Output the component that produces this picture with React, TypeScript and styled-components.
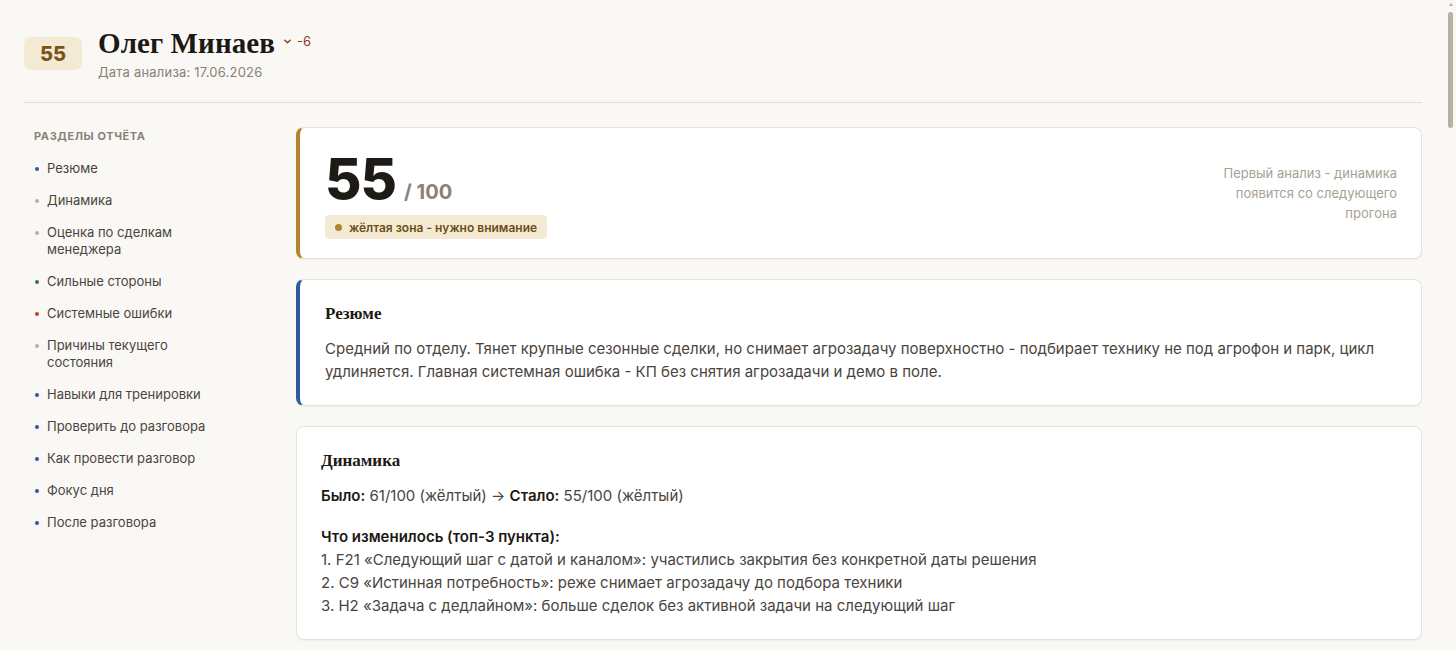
import React from 'react'
import styled, { createGlobalStyle } from 'styled-components'

const GlobalStyle = createGlobalStyle`
  html, body {
    margin: 0;
    padding: 0;
    background: #faf8f5;
  }
  body {
    font-family: Inter, 'Noto Sans', sans-serif;
    color: #3f3a35;
  }
  ::-webkit-scrollbar {
    width: 0;
  }
`

const Page = styled.div`
  padding: 28px 34px 40px 24px;
`

// the window scrollbar, drawn over the right edge of the page
const ScrollRail = styled.div`
  position: fixed;
  top: 0;
  right: 0;
  width: 10px;
  height: 100vh;
  background: #faf8f5;

  &::before {
    content: '';
    position: absolute;
    top: 3px;
    left: 3px;
    border-left: 2px solid transparent;
    border-right: 2px solid transparent;
    border-bottom: 3px solid #b9b0a4;
  }

  &::after {
    content: '';
    position: absolute;
    top: 12px;
    left: 2px;
    width: 5px;
    height: 116px;
    border-radius: 3px;
    background: #b9b0a4;
  }
`

const Header = styled.header`
  display: flex;
  align-items: flex-start;
  gap: 16px;
  padding-bottom: 22px;
  border-bottom: 1px solid #e4dfd7;
`

const ScoreBadge = styled.div`
  margin-top: 9px;
  width: 58px;
  height: 33px;
  border-radius: 7px;
  background: #f4ead4;
  color: #7a5518;
  font-size: 20px;
  font-weight: 800;
  display: flex;
  align-items: center;
  justify-content: center;
`

const NameBlock = styled.div`
  display: flex;
  flex-direction: column;
  gap: 6px;
`

const NameRow = styled.div`
  display: flex;
  align-items: center;
  gap: 8px;
`

const Name = styled.h1`
  margin: 0;
  font-family: 'Liberation Serif', serif;
  font-size: 29px;
  font-weight: 700;
  color: #1c1814;
  letter-spacing: 0.1px;
  line-height: 30px;
`

const Delta = styled.span`
  display: flex;
  align-items: center;
  gap: 5px;
  color: #8c3a2c;
  font-size: 13px;
  margin-top: -4px;
`

const DateText = styled.div`
  font-size: 13px;
  letter-spacing: 0.2px;
  color: #8a8077;
`

const Body = styled.div`
  display: grid;
  grid-template-columns: 248px 1fr;
  column-gap: 24px;
  padding-top: 24px;
`

const Sidebar = styled.nav`
  padding: 2px 50px 0 10px;
`

const SidebarTitle = styled.div`
  font-size: 11px;
  font-weight: 700;
  letter-spacing: 0.6px;
  color: #8a8077;
  text-transform: uppercase;
  margin-bottom: 17px;
`

const NavList = styled.ul`
  list-style: none;
  margin: 0;
  padding: 0;
  display: flex;
  flex-direction: column;
  gap: 15px;
`

const NavItem = styled.li<{ $dot: string }>`
  position: relative;
  padding-left: 13px;
  font-size: 13px;
  line-height: 17px;
  color: #4a443e;

  &::before {
    content: '';
    position: absolute;
    left: 1px;
    top: 7px;
    width: 4px;
    height: 4px;
    border-radius: 50%;
    background: ${(p) => p.$dot};
  }
`

const Main = styled.main`
  display: flex;
  flex-direction: column;
  gap: 20px;
  min-width: 0;
`

const Card = styled.section<{ $accent?: string }>`
  background: #fff;
  border: 1px solid #e7e1d8;
  border-left: ${(p) => (p.$accent ? `4px solid ${p.$accent}` : '1px solid #e7e1d8')};
  border-radius: 8px;
  box-shadow: 0 1px 2px rgba(60, 45, 30, 0.06);
  padding: ${(p) => (p.$accent ? '22px 24px 22px 25px' : '22px 24px')};
`

const ScoreCard = styled(Card)`
  display: flex;
  justify-content: space-between;
  align-items: center;
  padding-top: 21px;
  padding-bottom: 19px;
`

const ScoreLeft = styled.div`
  display: flex;
  flex-direction: column;
  gap: 6px;
`

const ScoreLine = styled.div`
  display: flex;
  align-items: baseline;
  gap: 8px;
`

const BigScore = styled.span`
  font-size: 56px;
  line-height: 60px;
  font-weight: 800;
  color: #1e1a16;
  letter-spacing: -1px;
`

const OutOf = styled.span`
  font-size: 20px;
  font-weight: 700;
  color: #8a8077;
`

const ZonePill = styled.span`
  align-self: flex-start;
  display: inline-flex;
  align-items: center;
  gap: 7px;
  padding: 0 10px;
  height: 24px;
  border-radius: 4px;
  background: #f4ead4;
  color: #6d4e18;
  font-size: 12px;
  font-weight: 600;

  &::before {
    content: '';
    width: 7px;
    height: 7px;
    border-radius: 50%;
    background: #b5832e;
  }
`

const ScoreNote = styled.div`
  max-width: 180px;
  text-align: right;
  font-size: 13px;
  line-height: 20px;
  color: #a89f95;
  margin-top: -2px;
`

const CardTitle = styled.h2`
  margin: 0 0 12px;
  font-family: 'Liberation Serif', serif;
  font-size: 17px;
  font-weight: 700;
  color: #1c1814;
  line-height: 23px;
`

const Text = styled.p`
  margin: 0;
  font-size: 15px;
  line-height: 23px;
  color: #4a443e;
`

const Spaced = styled(Text)`
  margin-top: 18px;
`

const Strong = styled.b`
  font-weight: 600;
  color: #1c1814;
`

const Chevron = () => (
  <svg width="9" height="9" viewBox="0 0 10 10" fill="none">
    <path d="M2 3.5 L5 6.5 L8 3.5" stroke="#8c3a2c" strokeWidth="1.6" strokeLinecap="round" strokeLinejoin="round" />
  </svg>
)

const sections = [
  { label: 'Резюме', dot: '#2b5c9e' },
  { label: 'Динамика', dot: '#b9b0a4' },
  { label: 'Оценка по сделкам менеджера', dot: '#b9b0a4' },
  { label: 'Сильные стороны', dot: '#2f7a52' },
  { label: 'Системные ошибки', dot: '#b8432f' },
  { label: 'Причины текущего состояния', dot: '#b9b0a4' },
  { label: 'Навыки для тренировки', dot: '#2b5c9e' },
  { label: 'Проверить до разговора', dot: '#2b5c9e' },
  { label: 'Как провести разговор', dot: '#2b5c9e' },
  { label: 'Фокус дня', dot: '#2b5c9e' },
  { label: 'После разговора', dot: '#2b5c9e' },
]

const moreCards = [
  {
    title: 'Оценка по сделкам менеджера',
    text: 'Разобрано 14 сделок за период. 5 в зелёной зоне, 6 в жёлтой, 3 в красной. Основные потери - на этапе квалификации и подготовки КП.',
  },
  {
    title: 'Сильные стороны',
    text: 'Уверенно ведёт крупных клиентов, держит контакт с ЛПР, хорошо знает линейку техники и условия лизинга.',
    accent: '#2f7a52',
  },
  {
    title: 'Системные ошибки',
    text: 'КП отправляется до снятия агрозадачи: не уточняет агрофон, площади и текущий парк. Демо в поле не предлагается.',
    accent: '#b8432f',
  },
  {
    title: 'Причины текущего состояния',
    text: 'Высокая загрузка в сезон, привычка работать от прайса, отсутствие чек-листа по агрозадаче.',
  },
  {
    title: 'Навыки для тренировки',
    text: '1. Снятие агрозадачи до подбора техники. 2. Фиксация следующего шага с датой и каналом. 3. Предложение демо в поле.',
  },
  {
    title: 'Проверить до разговора',
    text: 'Открыть 3 последние сделки с КП без демо, посмотреть комментарии в CRM и даты следующих шагов.',
  },
  {
    title: 'Как провести разговор',
    text: 'Начать с сильных сторон, затем разобрать одну сделку по шагам и договориться о конкретном действии на неделю.',
  },
  {
    title: 'Фокус дня',
    text: 'Снимать агрозадачу до КП в каждой новой сделке.',
  },
  {
    title: 'После разговора',
    text: 'Зафиксировать договорённости и проверить результат на следующем прогоне анализа.',
  },
]

export default function App() {
  return (
    <>
      <GlobalStyle />
      <ScrollRail />
      <Page>
        <Header>
          <ScoreBadge>55</ScoreBadge>
          <NameBlock>
            <NameRow>
              <Name>Олег Минаев</Name>
              <Delta>
                <Chevron />
                -6
              </Delta>
            </NameRow>
            <DateText>Дата анализа: 17.06.2026</DateText>
          </NameBlock>
        </Header>
        <Body>
          <Sidebar>
            <SidebarTitle>Разделы отчёта</SidebarTitle>
            <NavList>
              {sections.map((s) => (
                <NavItem key={s.label} $dot={s.dot}>
                  {s.label}
                </NavItem>
              ))}
            </NavList>
          </Sidebar>
          <Main>
            <ScoreCard $accent="#b5832e">
              <ScoreLeft>
                <ScoreLine>
                  <BigScore>55</BigScore>
                  <OutOf>/ 100</OutOf>
                </ScoreLine>
                <ZonePill>жёлтая зона - нужно внимание</ZonePill>
              </ScoreLeft>
              <ScoreNote>Первый анализ - динамика появится со следующего прогона</ScoreNote>
            </ScoreCard>
            <Card $accent="#2b5c9e">
              <CardTitle>Резюме</CardTitle>
              <Text>
                Средний по отделу. Тянет крупные сезонные сделки, но снимает агрозадачу
                поверхностно - подбирает технику не под агрофон и парк, цикл удлиняется.
                Главная системная ошибка - КП без снятия агрозадачи и демо в поле.
              </Text>
            </Card>
            <Card>
              <CardTitle>Динамика</CardTitle>
              <Text>
                <Strong>Было:</Strong> 61/100 (жёлтый) → <Strong>Стало:</Strong> 55/100 (жёлтый)
              </Text>
              <Spaced>
                <Strong>Что изменилось (топ-3 пункта):</Strong>
                <br />
                1. F21 «Следующий шаг с датой и каналом»: участились закрытия без конкретной даты решения
                <br />
                2. C9 «Истинная потребность»: реже снимает агрозадачу до подбора техники
                <br />
                3. H2 «Задача с дедлайном»: больше сделок без активной задачи на следующий шаг
              </Spaced>
            </Card>
            {moreCards.map((c) => (
              <Card key={c.title} $accent={c.accent}>
                <CardTitle>{c.title}</CardTitle>
                <Text>{c.text}</Text>
              </Card>
            ))}
          </Main>
        </Body>
      </Page>
    </>
  )
}
